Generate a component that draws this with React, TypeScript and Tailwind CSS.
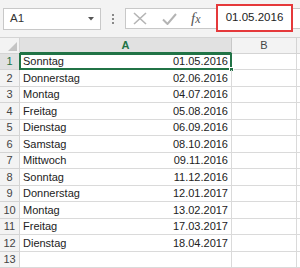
import type { ReactNode } from "react";

const rows: [string, string][] = [
  ["Sonntag", "01.05.2016"],
  ["Donnerstag", "02.06.2016"],
  ["Montag", "04.07.2016"],
  ["Freitag", "05.08.2016"],
  ["Dienstag", "06.09.2016"],
  ["Samstag", "08.10.2016"],
  ["Mittwoch", "09.11.2016"],
  ["Sonntag", "11.12.2016"],
  ["Donnerstag", "12.01.2017"],
  ["Montag", "13.02.2017"],
  ["Freitag", "17.03.2017"],
  ["Dienstag", "18.04.2017"],
  ["", ""],
];

function RowHead({ children, active }: { children: ReactNode; active?: boolean }) {
  return (
    <div
      className={[
        "flex w-[20px] shrink-0 items-center justify-center border-r border-b border-[#d4d4d4] text-[11px]",
        active ? "bg-[#e1e1e1] text-[#217346]" : "bg-[#f3f3f3] text-[#444]",
      ].join(" ")}
    >
      {children}
    </div>
  );
}

function FormulaBar() {
  return (
    <div className="flex h-[37px] items-center bg-[#f3f3f3]">
      <div className="ml-[3px] flex h-[22px] w-[98px] items-center justify-between border border-[#c8c8c8] bg-white pl-[6px] pr-[6px] text-[11.5px] text-[#333]">
        <span>A1</span>
        <svg width="6" height="4" viewBox="0 0 6 4">
          <polygon points="0,0 6,0 3,3.5" fill="#555" />
        </svg>
      </div>
      <div className="ml-[11px] flex w-[3px] flex-col gap-[2px]">
        <span className="h-[2px] w-[2px] bg-[#888]" />
        <span className="h-[2px] w-[2px] bg-[#888]" />
        <span className="h-[2px] w-[2px] bg-[#888]" />
      </div>
      <div className="ml-[10px] flex h-[21px] flex-1 items-center border-y border-l border-[#c8c8c8] bg-white">
        <svg className="ml-[7px]" width="14" height="13" viewBox="0 0 14 13">
          <path d="M1 1 L13 12 M13 1 L1 12" stroke="#b4b4b4" strokeWidth="1.6" fill="none" />
        </svg>
        <svg className="ml-[15px]" width="15" height="12" viewBox="0 0 15 12">
          <path d="M1 6.5 L5.5 11 L14 1" stroke="#b4b4b4" strokeWidth="2" fill="none" />
        </svg>
        <span className="ml-[14px] font-['Liberation_Serif'] text-[15px] italic leading-none text-[#555]">
          f<span className="text-[12px]">x</span>
        </span>
      </div>
    </div>
  );
}

export default function App() {
  return (
    <div className="relative h-[268px] w-[300px] overflow-hidden bg-white font-['Liberation_Sans',sans-serif]">
      <FormulaBar />
      {/* annotation box over the formula input */}
      <div className="absolute left-[216px] top-[4px] flex h-[28px] w-[77px] items-center justify-center border-2 border-[#e5393b] bg-white text-[11.5px] text-[#222]">
        01.05.2016
      </div>

      <div className="flex h-[16.5px] border-t border-[#d4d4d4]">
        <div className="relative w-[20px] shrink-0 border-r border-b border-[#d4d4d4] bg-[#f3f3f3]">
          <svg className="absolute bottom-[2px] right-[2px]" width="9" height="9" viewBox="0 0 9 9">
            <polygon points="9,0 9,9 0,9" fill="#c4c4c4" />
          </svg>
        </div>
        <div className="flex w-[212px] shrink-0 items-center justify-center border-r border-b-2 border-r-[#c8c8c8] border-b-[#217346] bg-[#e1e1e1] text-[11px] font-bold text-[#217346]">
          A
        </div>
        <div className="flex w-[65px] shrink-0 items-center justify-center border-r border-b border-[#d4d4d4] bg-[#f3f3f3] text-[11px] text-[#444]">
          B
        </div>
        <div className="flex-1 border-b border-[#d4d4d4] bg-[#f3f3f3]" />
      </div>

      {rows.map(([day, date], i) => (
        <div key={i} className="flex h-[16.5px] text-[11px] text-[#222]">
          <RowHead active={i === 0}>{i + 1}</RowHead>
          <div className="relative flex w-[212px] shrink-0 items-center justify-between border-r border-b border-[#dadada] pl-[3px] pr-[3px]">
            <span>{day}</span>
            <span>{date}</span>
            {i === 0 ? (
              <>
                <div className="absolute -left-[1px] -top-[1px] -right-[1px] -bottom-[1px] border-2 border-[#217346]" />
                <div className="absolute -bottom-[3px] -right-[3px] h-[5px] w-[5px] border border-white bg-[#217346]" />
              </>
            ) : null}
          </div>
          <div className="w-[65px] shrink-0 border-r border-b border-[#dadada]" />
          <div className="flex-1 border-b border-[#dadada]" />
        </div>
      ))}
    </div>
  );
}
